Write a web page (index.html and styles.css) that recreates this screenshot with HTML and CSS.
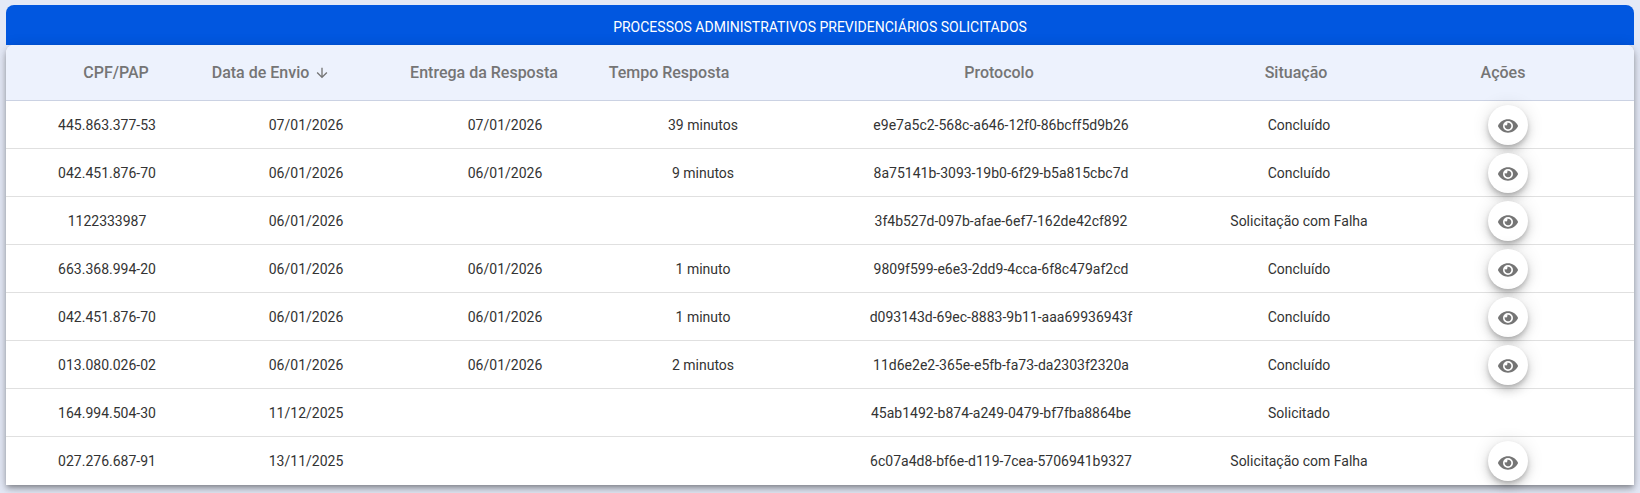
FILE: index.html
```html
<!DOCTYPE html>
<html lang="pt-BR">
<head>
<meta charset="utf-8">
<title>Processos</title>
<link rel="stylesheet" href="styles.css">
</head>
<body>
<section class="panel">
  <h1 class="panel-title">PROCESSOS ADMINISTRATIVOS PREVIDENCIÁRIOS SOLICITADOS</h1>
  <div class="card">
    <table class="grid">
      <colgroup><col class="c1"><col class="c2"><col class="c3"><col class="c4"><col class="c5"><col class="c6"><col class="c7"></colgroup>
      <thead>
        <tr>
          <th>CPF/PAP</th>
          <th><span class="sort">Data de Envio <svg class="arrow" viewBox="0 0 24 24"><path d="M20 12l-1.41-1.41L13 16.17V4h-2v12.17l-5.58-5.59L4 12l8 8 8-8z"/></svg></span></th>
          <th>Entrega da Resposta</th>
          <th>Tempo Resposta</th>
          <th>Protocolo</th>
          <th>Situação</th>
          <th>Ações</th>
        </tr>
      </thead>
      <tbody>
        <tr><td>445.863.377-53</td><td>07/01/2026</td><td>07/01/2026</td><td>39 minutos</td><td>e9e7a5c2-568c-a646-12f0-86bcff5d9b26</td><td>Concluído</td><td><button class="eye"><svg viewBox="0 0 576 512"><path d="M572.52 241.4C518.29 135.59 410.93 64 288 64S57.68 135.64 3.48 241.41a32.35 32.35 0 0 0 0 29.19C57.71 376.41 165.07 448 288 448s230.32-71.64 284.52-177.41a32.35 32.35 0 0 0 0-29.19zM288 400a144 144 0 1 1 144-144 143.93 143.93 0 0 1-144 144zm0-240a95.31 95.31 0 0 0-25.31 3.79 47.85 47.85 0 0 1-66.9 66.9A95.78 95.78 0 1 0 288 160z"/></svg></button></td></tr>
        <tr><td>042.451.876-70</td><td>06/01/2026</td><td>06/01/2026</td><td>9 minutos</td><td>8a75141b-3093-19b0-6f29-b5a815cbc7d</td><td>Concluído</td><td><button class="eye"><svg viewBox="0 0 576 512"><path d="M572.52 241.4C518.29 135.59 410.93 64 288 64S57.68 135.64 3.48 241.41a32.35 32.35 0 0 0 0 29.19C57.71 376.41 165.07 448 288 448s230.32-71.64 284.52-177.41a32.35 32.35 0 0 0 0-29.19zM288 400a144 144 0 1 1 144-144 143.93 143.93 0 0 1-144 144zm0-240a95.31 95.31 0 0 0-25.31 3.79 47.85 47.85 0 0 1-66.9 66.9A95.78 95.78 0 1 0 288 160z"/></svg></button></td></tr>
        <tr><td>1122333987</td><td>06/01/2026</td><td></td><td></td><td>3f4b527d-097b-afae-6ef7-162de42cf892</td><td>Solicitação com Falha</td><td><button class="eye"><svg viewBox="0 0 576 512"><path d="M572.52 241.4C518.29 135.59 410.93 64 288 64S57.68 135.64 3.48 241.41a32.35 32.35 0 0 0 0 29.19C57.71 376.41 165.07 448 288 448s230.32-71.64 284.52-177.41a32.35 32.35 0 0 0 0-29.19zM288 400a144 144 0 1 1 144-144 143.93 143.93 0 0 1-144 144zm0-240a95.31 95.31 0 0 0-25.31 3.79 47.85 47.85 0 0 1-66.9 66.9A95.78 95.78 0 1 0 288 160z"/></svg></button></td></tr>
        <tr><td>663.368.994-20</td><td>06/01/2026</td><td>06/01/2026</td><td>1 minuto</td><td>9809f599-e6e3-2dd9-4cca-6f8c479af2cd</td><td>Concluído</td><td><button class="eye"><svg viewBox="0 0 576 512"><path d="M572.52 241.4C518.29 135.59 410.93 64 288 64S57.68 135.64 3.48 241.41a32.35 32.35 0 0 0 0 29.19C57.71 376.41 165.07 448 288 448s230.32-71.64 284.52-177.41a32.35 32.35 0 0 0 0-29.19zM288 400a144 144 0 1 1 144-144 143.93 143.93 0 0 1-144 144zm0-240a95.31 95.31 0 0 0-25.31 3.79 47.85 47.85 0 0 1-66.9 66.9A95.78 95.78 0 1 0 288 160z"/></svg></button></td></tr>
        <tr><td>042.451.876-70</td><td>06/01/2026</td><td>06/01/2026</td><td>1 minuto</td><td>d093143d-69ec-8883-9b11-aaa69936943f</td><td>Concluído</td><td><button class="eye"><svg viewBox="0 0 576 512"><path d="M572.52 241.4C518.29 135.59 410.93 64 288 64S57.68 135.64 3.48 241.41a32.35 32.35 0 0 0 0 29.19C57.71 376.41 165.07 448 288 448s230.32-71.64 284.52-177.41a32.35 32.35 0 0 0 0-29.19zM288 400a144 144 0 1 1 144-144 143.93 143.93 0 0 1-144 144zm0-240a95.31 95.31 0 0 0-25.31 3.79 47.85 47.85 0 0 1-66.9 66.9A95.78 95.78 0 1 0 288 160z"/></svg></button></td></tr>
        <tr><td>013.080.026-02</td><td>06/01/2026</td><td>06/01/2026</td><td>2 minutos</td><td>11d6e2e2-365e-e5fb-fa73-da2303f2320a</td><td>Concluído</td><td><button class="eye"><svg viewBox="0 0 576 512"><path d="M572.52 241.4C518.29 135.59 410.93 64 288 64S57.68 135.64 3.48 241.41a32.35 32.35 0 0 0 0 29.19C57.71 376.41 165.07 448 288 448s230.32-71.64 284.52-177.41a32.35 32.35 0 0 0 0-29.19zM288 400a144 144 0 1 1 144-144 143.93 143.93 0 0 1-144 144zm0-240a95.31 95.31 0 0 0-25.31 3.79 47.85 47.85 0 0 1-66.9 66.9A95.78 95.78 0 1 0 288 160z"/></svg></button></td></tr>
        <tr><td>164.994.504-30</td><td>11/12/2025</td><td></td><td></td><td>45ab1492-b874-a249-0479-bf7fba8864be</td><td>Solicitado</td><td></td></tr>
        <tr><td>027.276.687-91</td><td>13/11/2025</td><td></td><td></td><td>6c07a4d8-bf6e-d119-7cea-5706941b9327</td><td>Solicitação com Falha</td><td><button class="eye"><svg viewBox="0 0 576 512"><path d="M572.52 241.4C518.29 135.59 410.93 64 288 64S57.68 135.64 3.48 241.41a32.35 32.35 0 0 0 0 29.19C57.71 376.41 165.07 448 288 448s230.32-71.64 284.52-177.41a32.35 32.35 0 0 0 0-29.19zM288 400a144 144 0 1 1 144-144 143.93 143.93 0 0 1-144 144zm0-240a95.31 95.31 0 0 0-25.31 3.79 47.85 47.85 0 0 1-66.9 66.9A95.78 95.78 0 1 0 288 160z"/></svg></button></td></tr>
      </tbody>
    </table>
  </div>
</section>
</body>
</html>
```
FILE: styles.css
```css
* { box-sizing: border-box; }
html, body { height: 100%; }
body {
  margin: 0;
  background: #e4e9f6;
  font-family: Roboto, "Liberation Sans", sans-serif;
  overflow: hidden;
}
.panel {
  padding: 5px 6px 0;
}
.panel-title {
  margin: 0;
  height: 40px;
  line-height: 44px;
  background: #0157e0;
  border-radius: 8px 8px 0 0;
  color: #fff;
  font-size: 14px;
  font-weight: 400;
  text-align: center;
}
.card {
  background: #fff;
  border-radius: 8px 8px 0 0;
  box-shadow: 0 3px 5px -1px rgba(0,0,0,.3), 0 5px 8px rgba(0,0,0,.14), 0 1px 14px rgba(0,0,0,.12);
  position: relative;
}
.grid {
  width: 100%;
  table-layout: fixed;
  border-collapse: separate;
  border-spacing: 0;
}
.c1 { width: 202px; }
.c2 { width: 196px; }
.c3 { width: 202px; }
.c4 { width: 194px; }
.c5 { width: 402px; }
.c6 { width: 194px; }
thead th {
  height: 56px;
  padding: 0;
  background: #edf2fd;
  border-bottom: 1px solid #cbd2e3;
  color: #757575;
  font-size: 16px;
  font-weight: 500;
  text-align: center;
  white-space: nowrap;
}
thead th:first-child { border-top-left-radius: 8px; }
thead th:last-child { border-top-right-radius: 8px; }
thead th:nth-child(1) { padding-left: 18px; }
thead th:nth-child(2) { padding-right: 70px; }
thead th:nth-child(3) { padding-right: 42px; }
thead th:nth-child(4) { padding-right: 68px; }
thead th:nth-child(5) { padding-right: 4px; }
thead th:nth-child(6) { padding-right: 6px; }
thead th:nth-child(7) { padding-right: 24px; }
.sort { display: inline-flex; align-items: center; gap: 5px; }
.arrow { width: 16px; height: 16px; fill: #757575; }
tbody td {
  height: 48px;
  padding: 0;
  border-bottom: 1px solid #e0e0e0;
  color: #333;
  font-size: 14px;
  text-align: center;
  white-space: nowrap;
}
tbody td:last-child { padding-right: 14px; }
tbody tr:last-child td { border-bottom: 0; }
.eye {
  display: inline-flex;
  align-items: center;
  justify-content: center;
  width: 40px;
  height: 40px;
  padding: 3px 0 0;
  border: 0;
  border-radius: 50%;
  background: #fff;
  vertical-align: middle;
  box-shadow: 0 3px 5px -1px rgba(0,0,0,.2), 0 6px 10px rgba(0,0,0,.14), 0 1px 18px rgba(0,0,0,.12);
}
.eye svg { width: 20px; height: 18px; fill: #757575; }
```
